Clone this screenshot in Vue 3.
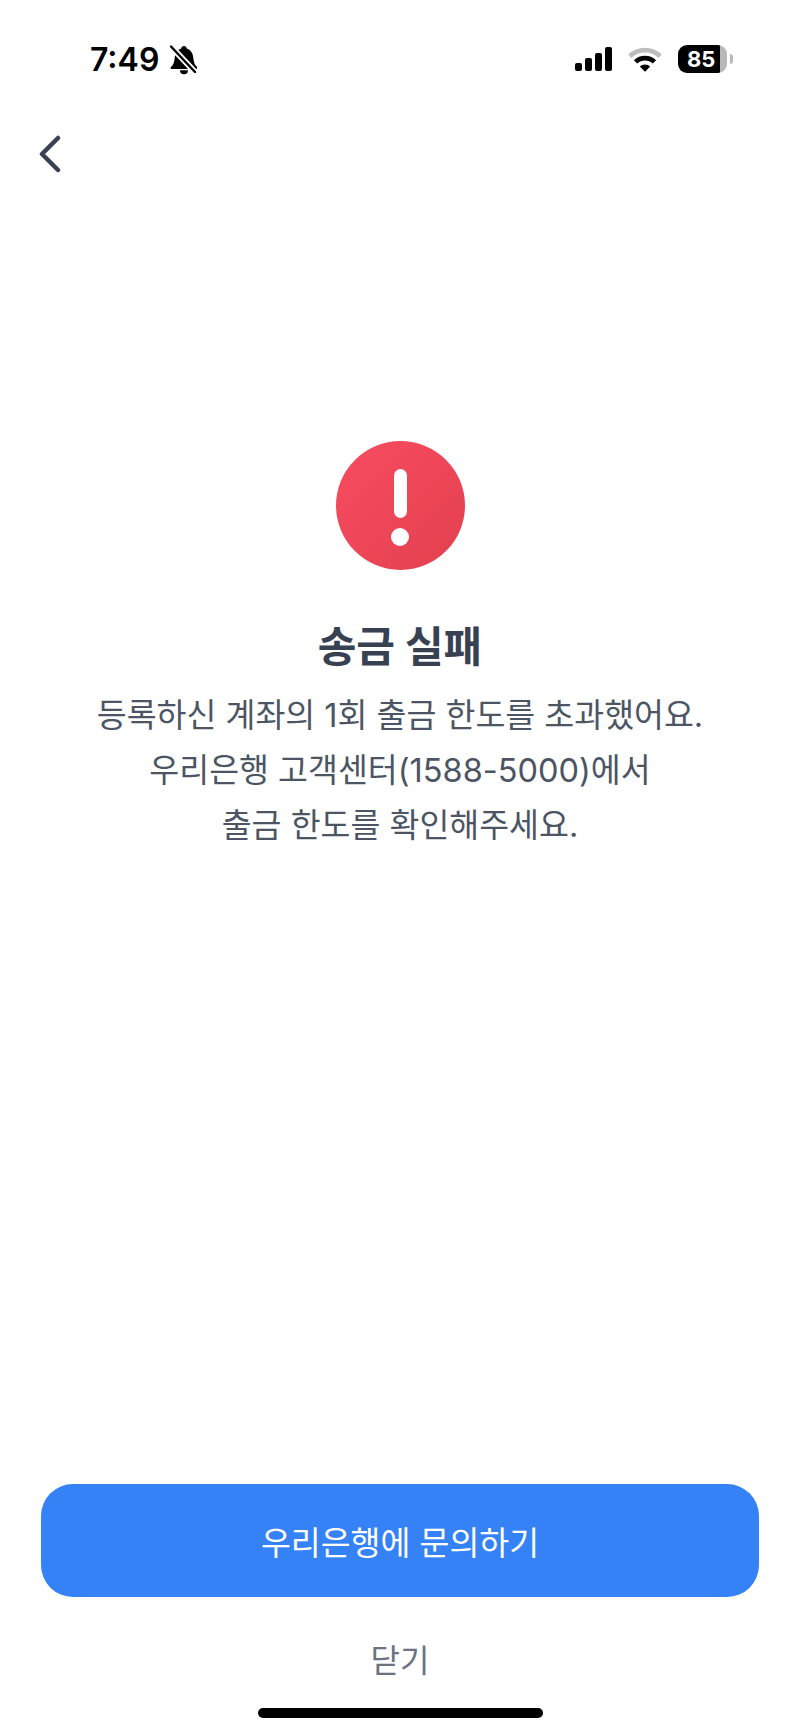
<template>
  <div class="screen">
    <div class="status-bar">
      <div class="status-left">
        <span class="time">7:49</span>
        <svg class="bell" viewBox="0 0 28 30" width="28" height="30">
          <path d="M15 1c-1.500 0-2.600 1-2.800 2.400C7.500 5 6 9 5.600 13.500 5.200 18 4 20 2 22c-.8.8-.4 2 .8 2h24.400c1.200 0 1.600-1.200.8-2-2-2-3.200-4-3.600-8.500C24 9 22.500 5 17.800 3.400 17.600 2 16.500 1 15 1z" fill="#000" />
          <path d="M11 25.200a4 4 0 0 0 8 0z" fill="#000" />
          <path d="M2 1.500 26 27" stroke="#fff" stroke-width="6" />
          <path d="M2 1.500 26 27" stroke="#000" stroke-width="2.400" stroke-linecap="round" />
        </svg>
      </div>
      <div class="status-right">
        <svg viewBox="0 0 40 26" width="40" height="26">
          <rect x="1" y="17" width="7" height="8" rx="2" fill="#000" />
          <rect x="11" y="12" width="7" height="13" rx="2" fill="#000" />
          <rect x="21" y="7" width="7" height="18" rx="2" fill="#000" />
          <rect x="31" y="1" width="7" height="24" rx="2" fill="#000" />
        </svg>
        <svg class="wifi" viewBox="0 0 36 26" width="34" height="25">
          <path d="M2 9.500a23 23 0 0 1 32 0" fill="none" stroke="#bdbdbd" stroke-width="5" />
          <path d="M8 15.500a14.500 14.500 0 0 1 20 0" fill="none" stroke="#000" stroke-width="5" />
          <path d="M12.500 20.500 18 26l5.500-5.500a8 8 0 0 0-11 0z" fill="#000" />
        </svg>
        <div class="battery">
          <div class="battery-body">
            <span class="battery-level">85</span>
          </div>
          <span class="battery-cap"></span>
        </div>
      </div>
    </div>

    <div class="nav">
      <button class="back" aria-label="뒤로">
        <svg viewBox="0 0 24 38" width="24" height="38">
          <path d="M20 3 4 19l16 16" fill="none" stroke="#374151" stroke-width="4.500" stroke-linecap="round" stroke-linejoin="round" />
        </svg>
      </button>
    </div>

    <main class="result">
      <div class="alert-icon">
        <span class="alert-bar"></span>
        <span class="alert-dot"></span>
      </div>
      <h1 class="title">송금 실패</h1>
      <p class="message">
        등록하신 계좌의 1회 출금 한도를 초과했어요.<br />
        우리은행 고객센터(1588-5000)에서<br />
        출금 한도를 확인해주세요.
      </p>
    </main>

    <div class="actions">
      <button class="primary">우리은행에 문의하기</button>
      <button class="secondary">닫기</button>
    </div>
    <div class="home-indicator"></div>
  </div>
</template>

<script setup>
</script>

<style>
html,
body {
  margin: 0;
  background: #fff;
}
</style>

<style scoped>
.screen {
  width: 800px;
  height: 1735px;
  display: flex;
  flex-direction: column;
  background: #fff;
  font-family: "Inter", "Noto Sans CJK KR", sans-serif;
  overflow: hidden;
}

.status-bar {
  height: 120px;
  box-sizing: border-box;
  padding: 40px 67px 0 90px;
  display: flex;
  justify-content: space-between;
  align-items: flex-start;
}

.status-left {
  display: flex;
  align-items: center;
  gap: 10px;
}

.time {
  font-size: 32px;
  line-height: 40px;
  font-weight: 600;
  color: #000;
}

.status-right {
  display: flex;
  align-items: center;
  gap: 14px;
  height: 40px;
  margin-top: -1px;
}

.battery {
  display: flex;
  align-items: center;
  gap: 3px;
  margin-left: 2px;
}

.battery-body {
  width: 49px;
  height: 28px;
  border-radius: 9px;
  background: linear-gradient(90deg, #000 85%, #b8b8b8 85%);
  display: flex;
  align-items: center;
  padding-left: 9px;
  box-sizing: border-box;
}

.battery-level {
  font-size: 22px;
  line-height: 28px;
  font-weight: 700;
  color: #fff;
}

.battery-cap {
  width: 3px;
  height: 10px;
  border-radius: 0 3px 3px 0;
  background: #b8b8b8;
}

.nav {
  height: 60px;
  padding-left: 38px;
  display: flex;
  align-items: flex-start;
}

.back {
  border: 0;
  padding: 15px 0 0;
  background: none;
}

.result {
  flex: 1;
  padding-top: 261px;
  display: flex;
  flex-direction: column;
  align-items: center;
}

.alert-icon {
  width: 129px;
  height: 129px;
  border-radius: 50%;
  background: linear-gradient(135deg, #f84c60 0%, #e2404f 100%);
  display: flex;
  flex-direction: column;
  align-items: center;
  padding-top: 28px;
  box-sizing: border-box;
}

.alert-bar {
  width: 13px;
  height: 49px;
  border-radius: 7px;
  background: #fff;
}

.alert-dot {
  width: 18px;
  height: 18px;
  margin-top: 10px;
  border-radius: 50%;
  background: #fff;
}

.title {
  margin: 52px 0 0;
  font-size: 42px;
  line-height: 50px;
  font-weight: 700;
  color: #374151;
}

.message {
  margin: 16px 0 0;
  font-size: 32.500px;
  line-height: 55px;
  font-weight: 400;
  color: #4b5563;
  text-align: center;
}

.actions {
  padding: 0 41px;
  display: flex;
  flex-direction: column;
}

.primary {
  height: 113px;
  border: 0;
  border-radius: 32px;
  background: #3482f6;
  color: #fff;
  font-family: inherit;
  font-size: 32.500px;
  font-weight: 400;
}

.secondary {
  height: 62px;
  margin-top: 30px;
  border: 0;
  background: none;
  color: #6b7280;
  font-family: inherit;
  font-size: 32px;
  font-weight: 400;
}

.home-indicator {
  width: 285px;
  height: 10px;
  margin: 19px auto 17px;
  border-radius: 5px;
  background: #000;
}
</style>
